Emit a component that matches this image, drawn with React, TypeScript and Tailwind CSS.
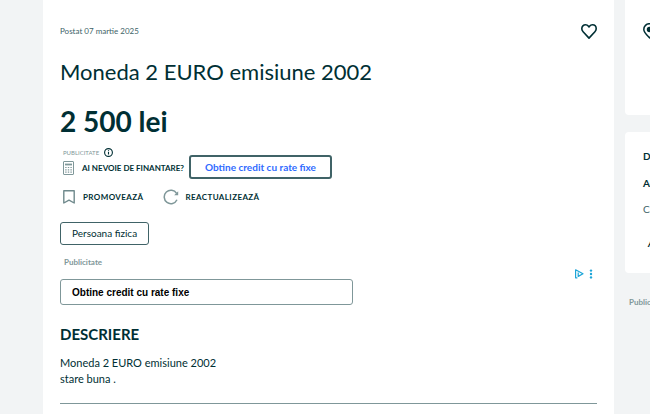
import { useState } from "react";

function CalculatorIcon() {
  return (
    <svg className="w-[11px] h-[14px]" viewBox="0 0 11 14" fill="none" stroke="#7f9799" aria-hidden="true">
      <rect x="0.5" y="0.5" width="10" height="13" rx="0.5" />
      <path d="M2 3.5h7" strokeWidth="1.8" />
      <path d="M2.2 6.5h7M2.2 8.8h7M2.2 11.1h7" strokeWidth="1.2" strokeDasharray="1.4 1.2" />
    </svg>
  );
}

function BookmarkIcon() {
  return (
    <svg className="w-[12px] h-[14px]" viewBox="0 0 12 14" fill="none" stroke="#6f898c" strokeWidth="1.4" strokeLinejoin="round" aria-hidden="true">
      <path d="M0.8 0.8h10.4v12.2L6 10.2 0.8 13z" />
    </svg>
  );
}

function RefreshIcon() {
  return (
    <svg className="w-[16px] h-[16px]" viewBox="0 0 16 16" fill="none" stroke="#7f9799" strokeWidth="1.5" aria-hidden="true">
      <path d="M14 10.8A6.7 6.7 0 1 1 13.6 4.4" />
      <path d="M15.2 2.2v4h-4z" fill="#7f9799" stroke="none" />
    </svg>
  );
}

function InfoIcon() {
  return (
    <svg className="w-[9px] h-[9px]" viewBox="0 0 9 9" fill="none" stroke="#002f34" aria-hidden="true">
      <circle cx="4.5" cy="4.5" r="3.9" strokeWidth="1.1" />
      <path d="M4.5 4v2.6M4.5 2.3v0.9" strokeWidth="1.1" />
    </svg>
  );
}

function HeartIcon({ filled }: { filled: boolean }) {
  return (
    <svg className="w-[16px] h-[15px]" viewBox="0 0 16 15" fill={filled ? "#002f34" : "none"} stroke="#002f34" strokeWidth="1.6" strokeLinejoin="round" aria-hidden="true">
      <path d="M4.6 0.8C5.6 0.8 6.6 1.2 7.3 2.1L8 2.9l.7-.8c.7-.9 1.7-1.3 2.7-1.3 2.2 0 3.8 1.7 3.8 3.9 0 1.2-.5 2.1-1.3 3L8 14.1 2.1 7.7C1.3 6.8 0.8 5.9 0.8 4.7c0-2.2 1.6-3.9 3.8-3.9z" />
    </svg>
  );
}

function PinIcon() {
  return (
    <svg className="w-[13px] h-[16px]" viewBox="0 0 13 16" fill="none" stroke="#002f34" strokeWidth="1.5" aria-hidden="true">
      <path d="M6.5 14.8C3 11 0.8 9 0.8 6.4a5.7 5.7 0 0 1 11.4 0c0 2.6-2.2 4.6-5.7 8.4z" />
      <circle cx="6.5" cy="6.4" r="2" fill="#002f34" />
    </svg>
  );
}

function AdChoicesIcon() {
  return (
    <svg className="w-[18px] h-[10px]" viewBox="0 0 18 10" fill="none" stroke="#1da5d8" aria-hidden="true">
      <path d="M2.4 8.8H0.6V0.8L8 4.8 3.2 7.4V3.6" strokeWidth="1.2" strokeLinejoin="round" />
      <g fill="#1da5d8" stroke="none">
        <circle cx="16" cy="1.6" r="1.2" />
        <circle cx="16" cy="5" r="1.2" />
        <circle cx="16" cy="8.4" r="1.2" />
      </g>
    </svg>
  );
}

function Sidebar() {
  return (
    <aside className="w-72 shrink-0 -mr-[263px]">
      <div className="bg-white rounded-b h-[115px] pt-[23px] pl-[18px]">
        <PinIcon />
      </div>
      <div className="bg-white rounded mt-[17px] pt-4 pl-[18px] h-[141px]">
        <h3 className="text-[10px] leading-4 font-bold">DESPRE OLX</h3>
        <p className="mt-[11px] text-[10px] leading-4 font-bold">Acasa</p>
        <p className="mt-[10px] text-[10px] leading-4 text-[#406367]">Cauta</p>
        <p className="mt-[18px] pl-[5px] text-[10px] leading-4 font-bold italic">Ajutor</p>
      </div>
      <p className="mt-[21px] pl-1 text-[8px] leading-4 font-bold text-[#7f9799]">Publicitate</p>
    </aside>
  );
}

export default function App() {
  const [saved, setSaved] = useState(false);

  return (
    <div className="min-h-screen flex gap-[11px] pl-[43px] overflow-hidden bg-[#f2f4f5] text-[#002f34] font-['Lato','Liberation_Sans',sans-serif]">
      <main className="flex-1 min-w-0 bg-white px-[17px] pt-[22px]">
        <div className="flex items-center justify-between h-[18px]">
          <span className="text-[8px] leading-4 text-[#406367]">Postat 07 martie 2025</span>
          <button type="button" aria-label="Favorite" aria-pressed={saved} onClick={() => setSaved(!saved)}>
            <HeartIcon filled={saved} />
          </button>
        </div>

        <h1 className="mt-4 text-[22px] leading-8 whitespace-nowrap">Moneda 2 EURO emisiune 2002</h1>
        <p className="mt-[17px] text-[28px] leading-8 font-bold">2 500 lei</p>

        {/* Financing */}
        <div className="mt-[11px] flex items-start">
          <div>
            <div className="flex items-center gap-[5px] pl-[3px] h-[9px] text-[6px] text-[#7f9799]">
              PUBLICITATE
              <InfoIcon />
            </div>
            <div className="mt-[3px] flex items-center gap-2 pl-[3px] text-[8px] leading-4 font-bold">
              <CalculatorIcon />
              AI NEVOIE DE FINANTARE?
            </div>
          </div>
          <a href="#credit" className="mt-[7px] ml-[5px] h-6 px-[14px] flex items-center rounded-[3px] border-2 border-[#406367] text-[10px] font-bold text-[#2f6bff]">
            Obtine credit cu rate fixe
          </a>
        </div>

        <div className="mt-[10px] flex items-center gap-5 text-[8px] leading-4 font-bold tracking-wider">
          <button type="button" className="flex items-center gap-2 pl-[3px]">
            <BookmarkIcon />
            PROMOVEAZĂ
          </button>
          <button type="button" className="flex items-center gap-[6px]">
            <RefreshIcon />
            REACTUALIZEAZĂ
          </button>
        </div>

        <div className="mt-[17px] flex">
          <span className="h-[23px] px-[11px] flex items-center rounded-[3px] border border-[#406367] text-[10px]">Persoana fizica</span>
        </div>

        {/* Sponsored link */}
        <p className="mt-[9px] pl-1 text-[8px] leading-4 font-bold text-[#7f9799]">Publicitate</p>
        <div className="mt-[9px] flex justify-between items-start">
          <a href="#credit" className="w-6/11 h-[26px] px-[11px] flex items-center rounded-[3px] border border-[#7f9799] font-['Liberation_Sans',sans-serif] text-[10px] font-bold text-black">
            Obtine credit cu rate fixe
          </a>
          <button type="button" aria-label="AdChoices" className="-mt-[10px] mr-1">
            <AdChoicesIcon />
          </button>
        </div>

        <h2 className="mt-[17px] text-[15px] leading-6 font-bold">DESCRIERE</h2>
        <p className="mt-[9px] text-[11px] leading-4">
          Moneda 2 EURO emisiune 2002
          <br />
          stare buna .
        </p>
        <hr className="mt-4 border-[#7f9799]" />
      </main>
      <Sidebar />
    </div>
  );
}
